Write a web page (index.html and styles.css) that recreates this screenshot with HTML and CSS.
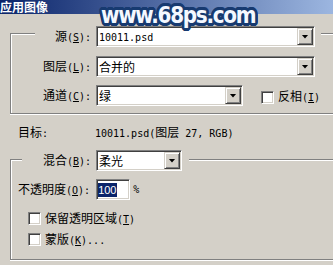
FILE: index.html
```html
<!DOCTYPE html>
<html>
<head>
<meta charset="utf-8">
<link rel="stylesheet" href="styles.css">
</head>
<body>
<div class="window">
  <div class="titlebar">应用图像</div>
  <div class="watermark">www.68ps.com</div>

  <div class="group g1">
    <div class="row legend l1">
      <span class="label">源<span class="m">(<u>S</u>):</span></span>
      <div class="combo wide"><span class="val"><span class="m">10011.psd</span></span><span class="btn"></span></div>
    </div>
    <div class="row r2">
      <span class="label">图层<span class="m">(<u>L</u>):</span></span>
      <div class="combo wide"><span class="val">合并的</span><span class="btn"></span></div>
    </div>
    <div class="row r3">
      <span class="label">通道<span class="m">(<u>C</u>):</span></span>
      <div class="combo chan"><span class="val">绿</span><span class="btn"></span></div>
      <div class="check inv"><span class="box"></span><span>反相<span class="m">(<u>I</u>)</span></span></div>
    </div>
  </div>

  <div class="target">
    <span class="tlabel">目标<span class="m">:</span></span>
    <span class="tval"><span class="m">10011.psd(</span>图层<span class="m"> 27, RGB)</span></span>
  </div>

  <div class="group g2">
    <div class="row legend l2">
      <span class="label">混合<span class="m">(<u>B</u>):</span></span>
      <div class="combo blend"><span class="val">柔光</span><span class="btn"></span></div>
    </div>
    <div class="row op">
      <span class="oplabel">不透明度<span class="m">(<u>O</u>):</span></span>
      <div class="opbox"><span class="sel">100</span></div>
      <span class="pct m">%</span>
    </div>
    <div class="check ck1"><span class="box"></span><span>保留透明区域<span class="m">(<u>T</u>)</span></span></div>
    <div class="check ck2"><span class="box"></span><span>蒙版<span class="m">(<u>K</u>)...</span></span></div>
  </div>
</div>
</body>
</html>
```

FILE: styles.css
```css
* { box-sizing: border-box; }
html, body { margin: 0; padding: 0; }
body {
  width: 333px;
  height: 265px;
  overflow: hidden;
  background: #d4d0c8;
  color: #000;
  font-family: "Noto Sans CJK SC", sans-serif;
  font-size: 12px;
  line-height: 14px;
}
.window { position: relative; }

.titlebar {
  height: 14px;
  padding-top: 0;
  background: linear-gradient(to right, #0a246a, #9cb6e0);
  color: #fff;
  font-weight: bold;
  font-size: 12px;
  line-height: 13px;
  white-space: nowrap;
}

.watermark {
  position: absolute;
  left: 101px;
  top: 3px;
  font-family: "DejaVu Sans", sans-serif;
  font-weight: bold;
  font-size: 20px;
  line-height: 20px;
  letter-spacing: -1.3px;
  color: #f4f8ff;
  transform: scaleY(1.18);
  transform-origin: 0 0;
  text-shadow:
    -2.5px 0 #173a70, 2.5px 0 #173a70, 0 -2.5px #173a70, 0 2.5px #173a70,
    -2px -2px #173a70, 2px -2px #173a70, -2px 2px #173a70, 2px 2px #173a70,
    -2.5px 1px #173a70, 2.5px 1px #173a70, -2.5px -1px #173a70, 2.5px -1px #173a70,
    1px 2.5px #173a70, -1px 2.5px #173a70, 1px -2.5px #173a70, -1px -2.5px #173a70;
  white-space: nowrap;
}

.m {
  font-family: "DejaVu Sans Mono", monospace;
  font-size: 10px;
}
u { text-decoration: underline; text-underline-offset: 1px; }

.group {
  margin: 19px -20px 0 10px;
  border: 1px solid #808080;
  border-right: 0;
  box-shadow: inset 1px 1px 0 #fff, 0 1px 0 #fff;
}
.g1 { padding-bottom: 7px; }
.g2 { margin-top: 20px; padding-bottom: 13px; }

.row {
  display: flex;
  align-items: center;
  height: 21px;
  gap: 5px;
}
.legend {
  width: fit-content;
  background: #d4d0c8;
}
.label { text-align: right; white-space: nowrap; }
.g1 .label { width: 80px; }
.l1 { margin-left: 24px; margin-top: -8px; padding-right: 6px; }
.l1 .label { width: 56px; }
.r2 { margin-top: 9px; }
.r3 { margin-top: 8px; }

.l2 { margin-left: 11px; margin-top: -10px; padding-right: 7px; }
.l2 .label { width: 69px; }

.combo {
  height: 21px;
  display: flex;
  align-items: center;
  background: #fff;
  border: 1px solid;
  border-color: #808080 #fff #fff #808080;
  box-shadow: inset 1px 1px 0 #404040, inset -1px -1px 0 #d4d0c8;
  padding: 1px;
}
.combo.wide { width: 219px; }
.combo.chan { width: 147px; }
.combo.blend { width: 86px; }
.val { flex: 1; padding-left: 1px; white-space: nowrap; }

.btn {
  width: 16px;
  height: 17px;
  flex: none;
  display: flex;
  align-items: center;
  justify-content: center;
  background: #d4d0c8;
  border: 1px solid;
  border-color: #d4d0c8 #404040 #404040 #d4d0c8;
  box-shadow: inset 1px 1px 0 #fff, inset -1px -1px 0 #808080;
}
.btn::before {
  content: "";
  width: 7px;
  height: 4px;
  background: #000;
  clip-path: polygon(0 0, 100% 0, 50% 100%);
}

.check {
  display: flex;
  align-items: center;
  gap: 4px;
  height: 13px;
  white-space: nowrap;
}
.box {
  width: 13px;
  height: 13px;
  flex: none;
  background: #fff;
  border: 1px solid;
  border-color: #808080 #fff #fff #808080;
  box-shadow: inset 1px 1px 0 #404040, inset -1px -1px 0 #d4d0c8;
}
.inv { margin-left: 13px; margin-top: 3px; }
.ck1 { margin-top: 12px; margin-left: 17px; }
.ck2 { margin-top: 8px; margin-left: 17px; }

.target {
  display: flex;
  margin-top: 11px;
  padding-left: 18px;
  height: 14px;
  white-space: nowrap;
}
.tlabel { width: 77px; }

.op { margin-top: 8px; padding-left: 7px; gap: 6px; }
.oplabel { white-space: nowrap; }
.opbox {
  width: 34px;
  height: 21px;
  background: #fff;
  border: 1px solid;
  border-color: #808080 #fff #fff #808080;
  box-shadow: inset 1px 1px 0 #404040, inset -1px -1px 0 #d4d0c8;
  padding: 2px 1px 1px 1px;
}
.sel {
  display: inline-block;
  background: #0a246a;
  color: #fff;
  font-family: "Liberation Sans", sans-serif;
  font-size: 11px;
  line-height: 14px;
  padding: 0 1px 0 0;
}
.pct { margin-left: -3px; }
```
